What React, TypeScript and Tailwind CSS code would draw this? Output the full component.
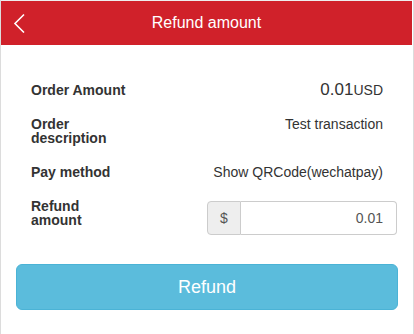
import React from "react"

const font = { fontFamily: '"Liberation Sans", Arial, sans-serif' }

export default function App() {
  return (
    <div className="w-[414px] h-[334px] bg-white flex text-[#333]" style={font}>
      <div className="w-px h-full bg-[#dcdcdc]" />
      <div className="w-[411px] flex flex-col">
        <div className="h-[45px] border-t border-[#eeeeee] bg-[#d0212a] relative flex items-center justify-center">
          <svg className="absolute left-[12px] top-[12px]" width="13" height="20" viewBox="0 0 13 20">
            <polyline points="11,1.5 2,10.5 11,19.5" fill="none" stroke="white" strokeWidth="1.6" />
          </svg>
          <span className="text-white text-[16px] leading-none">Refund amount</span>
        </div>

        <div className="flex flex-col pt-[28px]">
          <div className="h-[34px] pl-[30px] pr-[29px] flex items-baseline justify-between pt-[4px]">
            <span className="text-[14px] font-bold">Order Amount</span>
            <span>
              <span className="text-[17px]">0.01</span>
              <span className="text-[14px]">USD</span>
            </span>
          </div>

          <div className="mt-[10px] pl-[30px] pr-[29px] flex items-start justify-between">
            <span className="text-[14px] font-bold leading-[14px]">
              Order
              <br />
              description
            </span>
            <span className="text-[14px] leading-[14px]">Test transaction</span>
          </div>

          <div className="mt-[17px] h-[20px] pl-[30px] pr-[29px] flex items-center justify-between">
            <span className="text-[14px] font-bold">Pay method</span>
            <span className="text-[14px]">Show QRCode(wechatpay)</span>
          </div>

          <div className="mt-[17px] pl-[30px] pr-[15px] flex items-start justify-between">
            <span className="text-[14px] font-bold leading-[14px]">
              Refund
              <br />
              amount
            </span>
            <div className="mt-[2px] flex h-[34px] w-[190px]">
              <div className="w-[34px] flex items-center justify-center bg-[#eeeeee] border border-[#cccccc] rounded-l-[4px] text-[14px] text-[#555]">
                $
              </div>
              <div className="flex-1 flex items-center justify-end pr-[13px] border border-l-0 border-[#cccccc] rounded-r-[4px] text-[14px] text-[#555]">
                0.01
              </div>
            </div>
          </div>

          <div className="mt-[29px] pl-[15px] pr-[14px]">
            <button className="w-full h-[46px] rounded-[6px] bg-[#5bbcdc] border border-[#4bb3d6] text-white text-[18px]">
              Refund
            </button>
          </div>
        </div>
      </div>
      <div className="w-px h-full bg-white" />
      <div className="w-px h-full bg-[#dcdcdc]" />
    </div>
  )
}
